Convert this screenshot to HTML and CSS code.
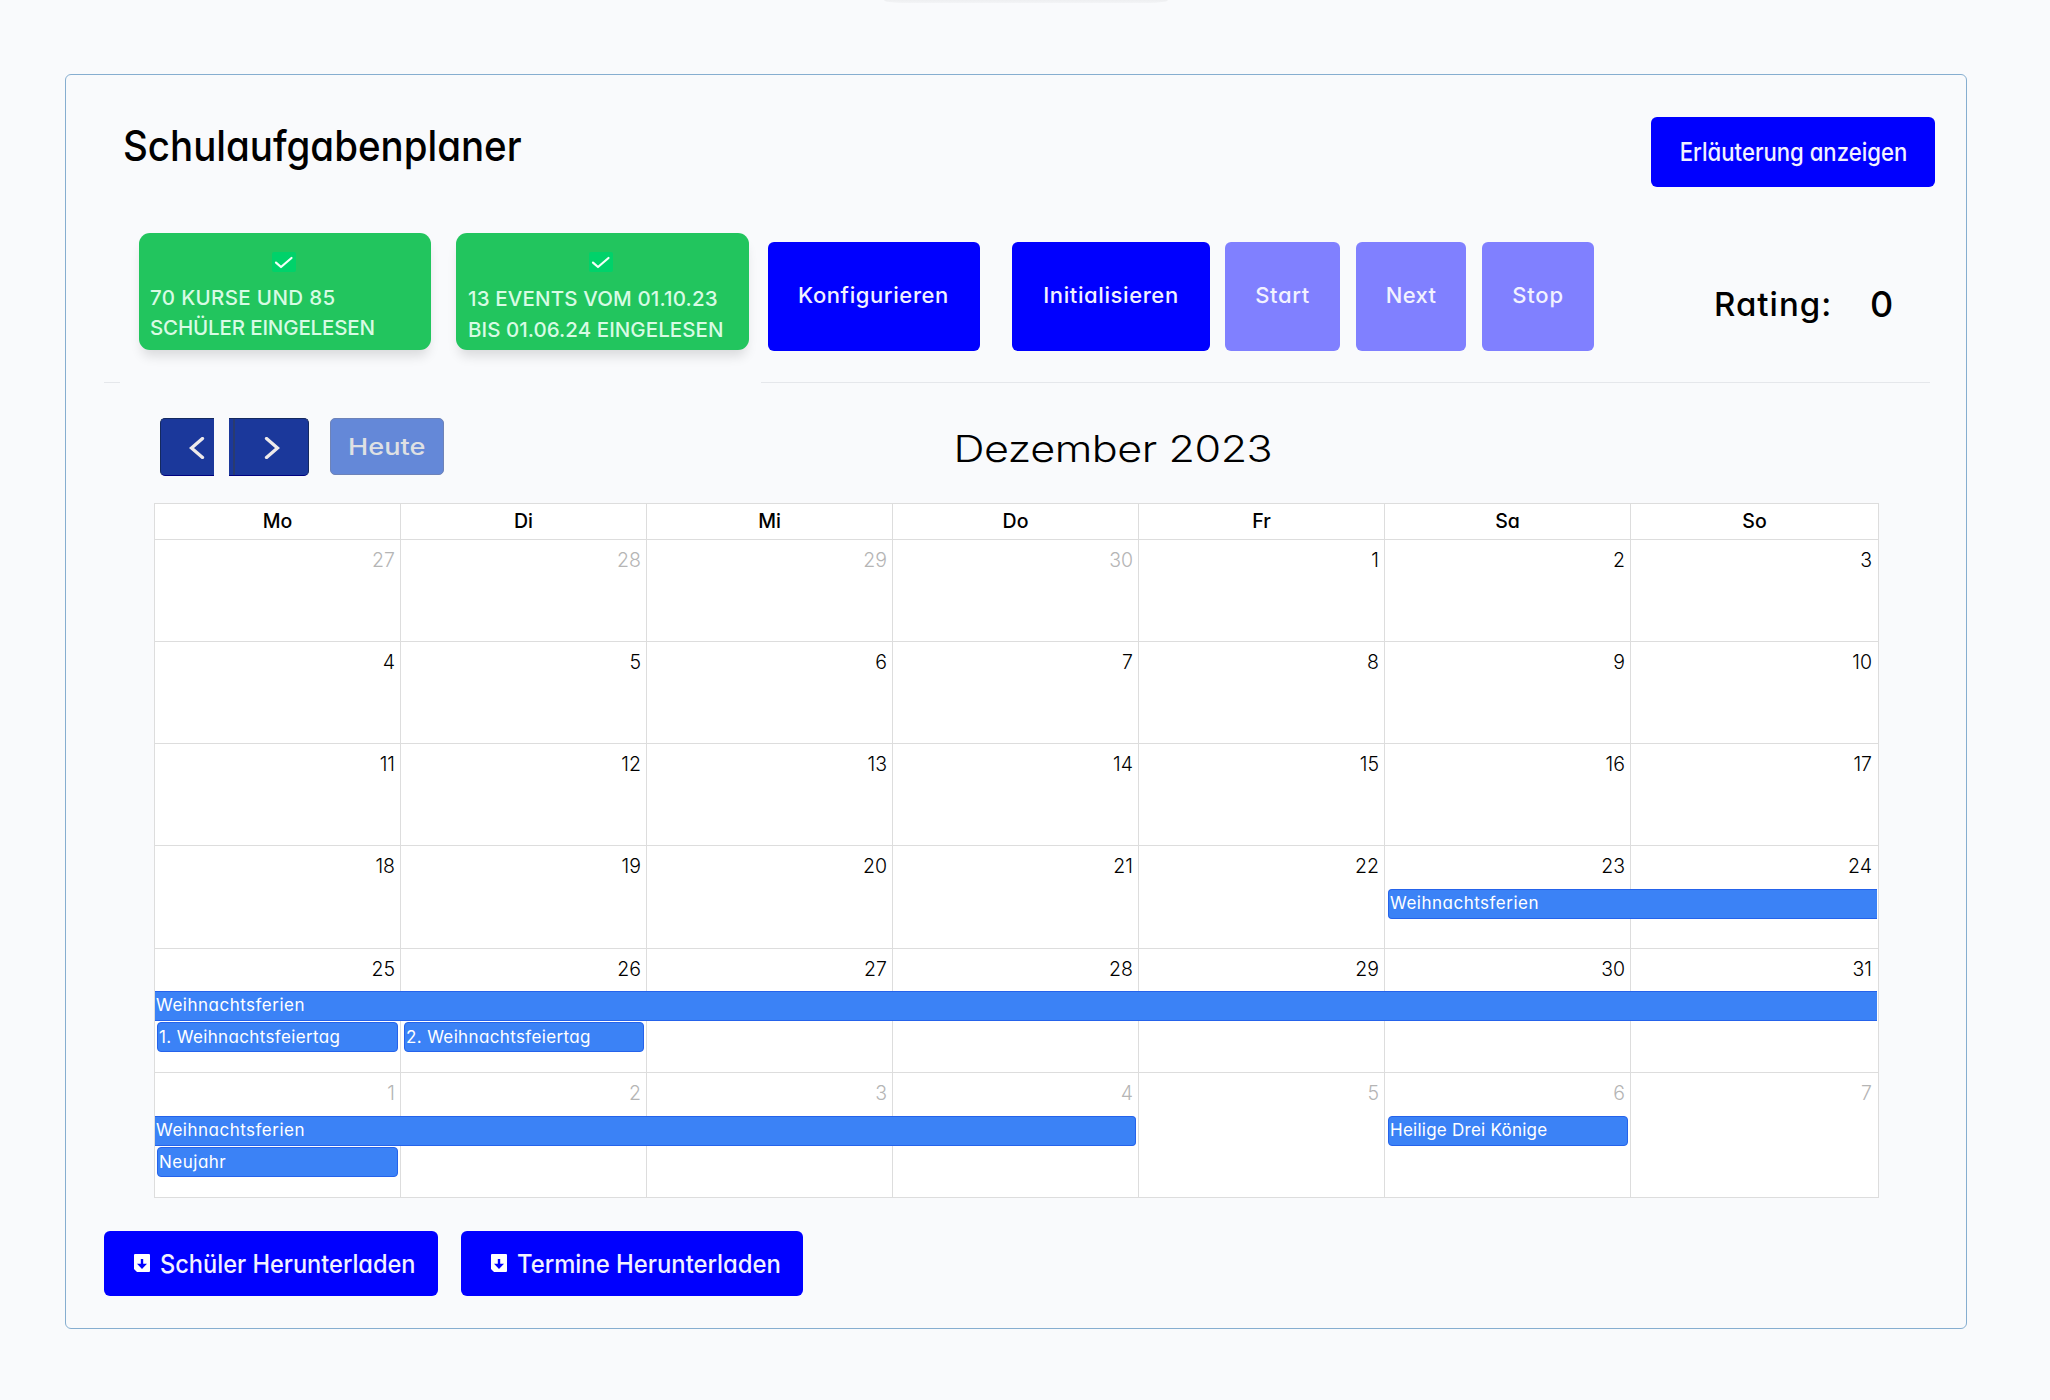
FILE: index.html
```html
<!DOCTYPE html>
<html lang="de">
<head>
<meta charset="utf-8">
<title>Schulaufgabenplaner</title>
<link rel="stylesheet" href="styles.css">
</head>
<body>
<div class="tab-edge"></div>
<main class="card">
  <header class="head">
    <h1 class="title">Schulaufgabenplaner</h1>
    <button class="btn explain"><span class="narrow">Erläuterung anzeigen</span></button>
  </header>

  <section class="toolbar">
    <div class="status">
      <svg class="check" viewBox="0 0 24 20"><rect width="24" height="20" rx="2" fill="#00d26a"/><path d="M4 10.600 9 15 19.500 6" fill="none" stroke="#f4fff8" stroke-width="2.200" stroke-linecap="round" stroke-linejoin="round"/></svg>
      <p class="line kurse">70 KURSE UND 85</p>
      <p class="line schueler">SCHÜLER EINGELESEN</p>
    </div>
    <div class="status second">
      <svg class="check" viewBox="0 0 24 20"><rect width="24" height="20" rx="2" fill="#00d26a"/><path d="M4 10.600 9 15 19.500 6" fill="none" stroke="#f4fff8" stroke-width="2.200" stroke-linecap="round" stroke-linejoin="round"/></svg>
      <p class="line events">13 EVENTS VOM 01.10.23</p>
      <p class="line bis">BIS 01.06.24 EINGELESEN</p>
    </div>
    <button class="btn action configure">Konfigurieren</button>
    <button class="btn action init">Initialisieren</button>
    <button class="btn action start" disabled>Start</button>
    <button class="btn action next" disabled>Next</button>
    <button class="btn action stop" disabled>Stop</button>
    <div class="rating"><span class="rating-label">Rating:</span><span class="rating-value">0</span></div>
  </section>

  <div class="rule"><i class="rule-short"></i><i class="rule-long"></i></div>

  <section class="cal-head">
    <button class="nav prev" aria-label="Zurück"><svg viewBox="0 0 16 22"><path d="M13.500 1.500 2.500 11l11 9.500"/></svg></button>
    <button class="nav forward" aria-label="Weiter"><svg viewBox="0 0 16 22"><path d="M2.500 1.500 13.500 11l-11 9.500"/></svg></button>
    <button class="today" disabled><span class="today-text">Heute</span></button>
    <h2 class="month"><span class="month-text">Dezember 2023</span></h2>
  </section>

  <section class="calendar">
    <div class="days"><b>Mo</b><b>Di</b><b>Mi</b><b>Do</b><b>Fr</b><b>Sa</b><b>So</b></div>
    <div class="week w1">
      <div class="day c1 other">27</div><div class="day c2 other">28</div><div class="day c3 other">29</div><div class="day c4 other">30</div><div class="day c5">1</div><div class="day c6">2</div><div class="day c7">3</div>
    </div>
    <div class="week w2">
      <div class="day c1">4</div><div class="day c2">5</div><div class="day c3">6</div><div class="day c4">7</div><div class="day c5">8</div><div class="day c6">9</div><div class="day c7">10</div>
    </div>
    <div class="week w3">
      <div class="day c1">11</div><div class="day c2">12</div><div class="day c3">13</div><div class="day c4">14</div><div class="day c5">15</div><div class="day c6">16</div><div class="day c7">17</div>
    </div>
    <div class="week w4">
      <div class="day c1">18</div><div class="day c2">19</div><div class="day c3">20</div><div class="day c4">21</div><div class="day c5">22</div><div class="day c6">23</div><div class="day c7">24</div>
      <div class="event opens from-sa">Weihnachtsferien</div>
    </div>
    <div class="week w5">
      <div class="day c1">25</div><div class="day c2">26</div><div class="day c3">27</div><div class="day c4">28</div><div class="day c5">29</div><div class="day c6">30</div><div class="day c7">31</div>
      <div class="event all-week">Weihnachtsferien</div>
      <div class="event opens closes lower on-mo tight">1. Weihnachtsfeiertag</div>
      <div class="event opens closes lower on-di tight">2. Weihnachtsfeiertag</div>
    </div>
    <div class="week w6">
      <div class="day c1 other">1</div><div class="day c2 other">2</div><div class="day c3 other">3</div><div class="day c4 other">4</div><div class="day c5 other">5</div><div class="day c6 other">6</div><div class="day c7 other">7</div>
      <div class="event closes to-do">Weihnachtsferien</div>
      <div class="event opens closes on-sa">Heilige Drei Könige</div>
      <div class="event opens closes lower on-mo">Neujahr</div>
    </div>
  </section>

  <footer class="downloads">
    <button class="btn download students"><svg class="dl" viewBox="0 0 16 18"><path fill="#fff" fill-rule="evenodd" d="M1 0h14a1 1 0 0 1 1 1v16a1 1 0 0 1-1 1H3l-3-3V1a1 1 0 0 1 1-1ZM6.800 5v4.800H3L8 15l5-5.200H9.200V5Z"/></svg><span class="students-text">Schüler Herunterladen</span></button>
    <button class="btn download dates"><svg class="dl" viewBox="0 0 16 18"><path fill="#fff" fill-rule="evenodd" d="M1 0h14a1 1 0 0 1 1 1v16a1 1 0 0 1-1 1H3l-3-3V1a1 1 0 0 1 1-1ZM6.800 5v4.800H3L8 15l5-5.200H9.200V5Z"/></svg><span class="dates-text">Termine Herunterladen</span></button>
  </footer>
</main>
</body>
</html>
```
FILE: styles.css
```css
* { box-sizing: border-box; }

body {
  margin: 0;
  background: #f9fafc;
  color: #000;
  font-family: Inter, "Open Sans", sans-serif;
  font-feature-settings: "cv11";
}

h1, h2, p { margin: 0; }

button {
  font: inherit;
  font-feature-settings: inherit;
  padding: 0;
  border: 0;
  white-space: nowrap;
}

.tab-edge {
  width: 284px;
  height: 3px;
  margin-left: 884px;
  background: linear-gradient(#eeeff1, #f3f4f6);
  border-radius: 0 0 20px 20px / 0 0 3px 3px;
}

.card {
  width: 1902px;
  height: 1255px;
  margin: 71px 0 0 65px;
  border: 1px solid #86aed0;
  border-radius: 6px;
}

/* Header */
.head {
  display: flex;
  justify-content: space-between;
  padding: 42px 31px 0 57px;
}

.title {
  height: 50px;
  margin-top: 4px;
  font-size: 42px;
  font-weight: 500;
  line-height: 50px;
  transform: scaleX(.916);
  transform-origin: left;
}

.btn {
  display: flex;
  align-items: center;
  justify-content: center;
  border-radius: 6px;
  background: #00f;
  color: #f2f2ff;
  font-weight: 500;
}

.btn:disabled { background: #8080ff; color: #f2f2ff; }

.explain { width: 284px; height: 70px; padding-left: 1px; font-size: 25px; }
.narrow { transform: scaleX(.885); }

/* Status boxes and controls */
.toolbar {
  display: flex;
  height: 118px;
  margin: 46px 0 0 73px;
}

.status {
  display: flex;
  flex-direction: column;
  width: 292px;
  height: 117px;
  padding: 19px 11px 0;
  border-radius: 11px;
  background: #22c55e;
  color: #d8fbe4;
  box-shadow: 0 9px 12px -3px rgba(0, 0, 0, .13);
}

.status.second { width: 293px; margin-left: 25px; }
.check { width: 24px; height: 20px; margin: 0 0 11px 122px; }
.line { height: 30px; font-size: 20.500px; font-weight: 450; line-height: 30px; white-space: nowrap; }
.kurse { letter-spacing: .35px; }
.schueler { letter-spacing: -.15px; }
.second .line { padding-left: 1px; height: 31px; line-height: 31px; }
.events { letter-spacing: .15px; }
.bis { letter-spacing: .05px; }

.action { height: 109px; margin-top: 9px; padding-bottom: 3px; font-size: 22px; letter-spacing: .6px; }
.configure { width: 212px; margin-left: 19px; padding-right: 1px; }
.init { width: 198px; margin-left: 32px; }
.start { width: 115px; margin-left: 15px; }
.next { width: 110px; margin-left: 16px; letter-spacing: .3px; }
.stop { width: 112px; margin-left: 16px; letter-spacing: .8px; }

.rating {
  display: flex;
  align-items: center;
  margin: 24px 0 0 120px;
  height: 94px;
  font-weight: 500;
}

.rating-label { width: 156px; font-size: 33px; letter-spacing: 1px; }
.rating-value { font-size: 36px; }

.rule {
  display: flex;
  gap: 641px;
  margin: 31px 36px 0 38px;
}

.rule i { height: 1px; background: #e5e7eb; }
.rule-short { width: 16px; }
.rule-long { flex: 1; }

/* Calendar toolbar */
.cal-head {
  display: flex;
  height: 59px;
  margin: 35px 0 0 94px;
}

.nav {
  display: flex;
  align-items: center;
  height: 58px;
  background: #1b389b;
  border: 1px solid #14295f;
  border-bottom-color: #000080;
}

.nav svg {
  width: 16px;
  height: 22px;
  margin-top: 2px;
  fill: none;
  stroke: #eeeaea;
  stroke-width: 3.300;
  stroke-linecap: round;
}

.prev { width: 54px; padding-left: 28px; border-right: 0; border-radius: 5px 0 0 5px; }

.forward {
  width: 80px;
  margin-left: 15px;
  padding-left: 35px;
  border-left: 0;
  border-radius: 0 5px 5px 0;
  background: linear-gradient(90deg, transparent 4px, #2a3b6f 4px 6px, transparent 6px) #1b389b;
}

.today {
  width: 114px;
  height: 57px;
  margin-left: 21px;
  border: 1px solid #6e83b8;
  border-radius: 5px;
  background: #6488d8;
  color: #dfe0e3;
  font-size: 23px;
  font-weight: 500;
}

.today-text { display: inline-block; transform: scaleX(1.180); }

.month {
  width: 320px;
  margin-left: 509px;
  text-align: center;
  font-size: 37px;
  font-weight: 300;
  line-height: 62px;
  white-space: nowrap;
}

.month-text { display: inline-block; letter-spacing: -.4px; transform: scaleX(1.165); }

/* Month grid */
.calendar {
  width: 1725px;
  margin: 26px 0 0 88px;
  border: solid #ddd;
  border-width: 1px 1px 0;
  background: #fff;
}

.days, .week {
  display: grid;
  grid-template-columns: repeat(6, 246px) 247px;
}

.days b {
  height: 36px;
  border: solid #ddd;
  border-width: 0 1px 1px 0;
  font-size: 19.500px;
  font-weight: 500;
  line-height: 35px;
  text-align: center;
}

.days b:last-child { border-right: 0; }

.week { grid-template-rows: 43px 31px 1fr; }
.w1, .w2, .w3 { height: 102px; }
.w4 { height: 103px; }
.w5 { height: 124px; grid-template-rows: 42px 31px 1fr; }
.w6 { height: 125px; }

.day {
  grid-row: 1 / -1;
  padding: 4px 5px 0 0;
  border: solid #ddd;
  border-width: 0 1px 1px 0;
  font-size: 19.500px;
  font-weight: 300;
  line-height: 32px;
  text-align: right;
}

.day.other { color: #b5b5b5; }
.c1 { grid-column: 1; }
.c2 { grid-column: 2; }
.c3 { grid-column: 3; }
.c4 { grid-column: 4; }
.c5 { grid-column: 5; }
.c6 { grid-column: 6; }
.day.c7 { grid-column: 7; border-right: 0; padding-right: 6px; }

.event {
  grid-row: 2;
  height: 30px;
  padding-left: 1px;
  border: solid #2563eb;
  border-width: 1px 0;
  background: #3b82f6;
  color: #fff;
  font-size: 17px;
  line-height: 27px;
  letter-spacing: .5px;
  white-space: nowrap;
}

.event.opens { margin-left: 3px; border-left-width: 1px; border-radius: 4px 0 0 4px; }
.event.closes { margin-right: 3px; border-right-width: 1px; border-radius: 0 4px 4px 0; }
.event.opens.closes { border-radius: 4px; }
.event.tight { letter-spacing: .36px; }
.event.lower { grid-row: 3; line-height: 28px; }
.event.on-mo { grid-column: 1; margin-left: 2px; }
.on-di { grid-column: 2; }
.event.on-sa { grid-column: 6; letter-spacing: .25px; }
.from-sa { grid-column: 6 / 8; margin-right: 1px; }
.all-week { grid-column: 1 / 8; margin-right: 1px; }
.to-do { grid-column: 1 / 5; }

/* Downloads */
.downloads {
  display: flex;
  gap: 23px;
  margin: 33px 0 0 38px;
}

.download { justify-content: flex-start; height: 65px; padding-left: 30px; gap: 10px; font-size: 25px; }
.dl { width: 16px; height: 18px; margin-bottom: 2px; }
.students { width: 334px; }
.dates { width: 342px; }
.students-text, .dates-text { transform: scaleX(.943); transform-origin: left; }
.dates-text { transform: scaleX(.953); }
```
